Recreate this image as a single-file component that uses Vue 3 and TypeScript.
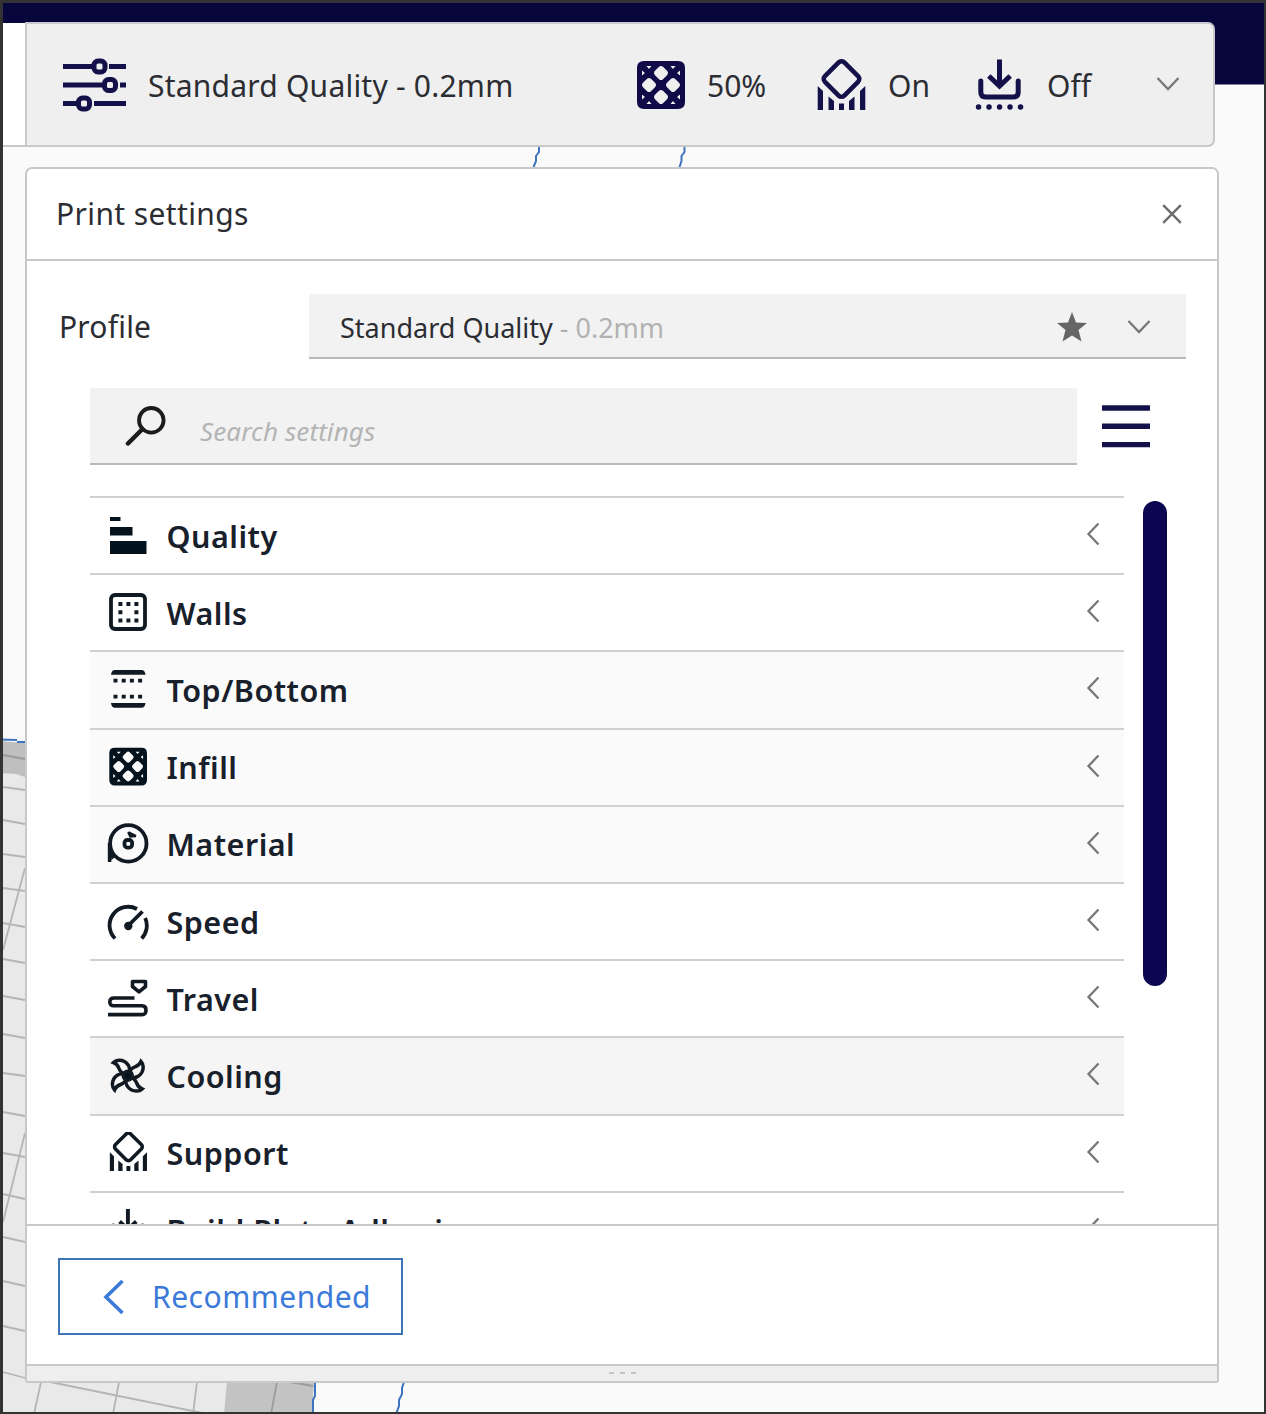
<script setup lang="ts">
interface Category {
  id: string
  label: string
  shade?: string
}

const categories: Category[] = [
  { id: 'quality', label: 'Quality' },
  { id: 'walls', label: 'Walls' },
  { id: 'topbottom', label: 'Top/Bottom', shade: 'soft' },
  { id: 'infill', label: 'Infill', shade: 'soft' },
  { id: 'material', label: 'Material', shade: 'soft' },
  { id: 'speed', label: 'Speed' },
  { id: 'travel', label: 'Travel' },
  { id: 'cooling', label: 'Cooling', shade: 'hover' },
  { id: 'support', label: 'Support' },
  { id: 'adhesion', label: 'Build Plate Adhesion' },
]

// Build plate grid lines: y on the left edge, y on the panel edge
const gridLines: [number, number][] = [
  [755, 759], [787, 790], [820, 824], [854, 857], [888, 891], [923, 927], [959, 963], [996, 1000],
  [1034, 1038], [1073, 1076], [1112, 1116], [1153, 1157], [1194, 1199], [1237, 1242],
  [1281, 1286], [1326, 1331], [1372, 1378],
]
const blades = [0, 90, 180, 270]
</script>

<template>
  <div class="window">
    <svg class="scene" viewBox="0 0 1266 1414" width="1266" height="1414">
      <rect width="1266" height="1414" fill="#fafafa" />
      <rect width="1266" height="84.5" fill="#06053c" />
      <rect y="23" width="30" height="123" fill="#fff" />
      <rect y="145" width="30" height="2" fill="#c8c8c8" />
      <path d="M0 741L25 743V1382H314L312 1414H0Z" fill="#e9e9e9" />
      <path d="M0 741L25 743V777L16 774L0 773Z" fill="#bfbfbf" />
      <path d="M227 1382H314L312 1414H224Z" fill="#c3c3c3" />
      <g stroke="#b5b5b5" stroke-width="1.8" fill="none">
        <path v-for="[a, b] in gridLines" :key="a" :d="`M3 ${a}L25 ${b}`" />
        <path d="M25 868L3 950M25 1133L3 1222M41 1382L34 1414M119 1382L113 1414M197 1382L193 1414M50 1382L207 1414" />
        <path d="M277 1382L271 1414M290 1382L313 1386M3 755L25 759" stroke="#9c9c9c" />
      </g>
      <g stroke="#3f74c0" stroke-width="2" fill="none">
        <path d="M0 739.500L17 740M17 742L25 742" />
        <path d="M539 147V152L536 156V161L533.500 167M684.500 147V152L681.500 156V161L679.500 167" />
        <path d="M315 1382V1396L313 1400V1414M404 1382L402 1388V1394L399 1400V1406L396 1414" />
      </g>
    </svg>

    <header class="summary">
      <svg width="64" height="54" viewBox="0 0 64 54" fill="none" stroke="#14104a" stroke-width="5">
        <path d="M0 8.500H30M46 8.500H63M0 27H40M57 27H63M0 45.500H14M31 45.500H63" />
        <rect x="31" y="3" width="11" height="11" rx="4" />
        <rect x="41.500" y="21.500" width="11" height="11" rx="4" />
        <rect x="15.500" y="40" width="11" height="11" rx="4" />
      </svg>
      <span class="big t-profile">Standard Quality - 0.2mm</span>
      <svg width="48" height="48" viewBox="0 0 48 48">
        <use href="#infill-shape" fill="#100b48" />
      </svg>
      <span class="big t-infill">50%</span>
      <svg width="49" height="52" viewBox="0 0 49 52" color="#14104a">
        <use href="#support-shape" />
      </svg>
      <span class="big t-support">On</span>
      <svg width="49" height="52" viewBox="0 0 49 52" color="#14104a">
        <use href="#adhesion-shape" />
      </svg>
      <span class="big t-adhesion">Off</span>
      <svg class="summary-chevron" width="24" height="16" viewBox="0 0 24 16" fill="none" stroke="#777" stroke-width="2.300">
        <path d="M1.500 2L12 13L22.500 2" />
      </svg>
    </header>

    <section class="panel">
      <div class="panel-head">
        <span class="big t-title">Print settings</span>
        <svg width="20" height="20" viewBox="0 0 20 20" stroke="#6c6c6c" stroke-width="2.400">
          <path d="M1.200 1.200L18.800 18.800M18.800 1.200L1.200 18.800" />
        </svg>
      </div>

      <div class="profile">
        <span class="big t-label">Profile</span>
        <div class="combo">
          <span class="t-combo">Standard Quality <i>- 0.2mm</i></span>
          <svg class="star" width="30" height="30" viewBox="0 0 30 30" fill="#666">
            <path d="M15 0L19 10.500L30 11L21.500 18L24.500 29.500L15 23.500L5.500 29.500L8.500 18L0 11L11 10.500Z" />
          </svg>
          <svg width="24" height="16" viewBox="0 0 24 16" fill="none" stroke="#777" stroke-width="2.300">
            <path d="M1.500 2L12 13L22.500 2" />
          </svg>
        </div>
      </div>

      <div class="search-row">
        <div class="search">
          <svg width="42" height="42" viewBox="0 0 42 42" fill="none" stroke="#1c1c1c" stroke-width="3.800">
            <circle cx="26.300" cy="15.300" r="12.300" />
            <path d="M17.500 24L3 38.500" stroke-width="4.500" stroke-linecap="round" />
          </svg>
          <span class="t-search">Search settings</span>
        </div>
        <svg class="menu" width="48" height="44" viewBox="0 0 48 44" stroke="#14104a" stroke-width="5.400">
          <path d="M0 4H48M0 22.300H48M0 40.600H48" />
        </svg>
      </div>

      <div class="list-area">
        <div class="list">
          <div v-for="c in categories" :key="c.id" class="row" :class="c.shade">
            <svg class="row-icon" width="42" height="42" viewBox="0 0 42 42" fill="none" stroke="#111a22" color="#111a22">
              <g v-if="c.id === 'quality'" fill="#03121c" stroke="none">
                <rect x="3" y="2" width="10.500" height="4" />
                <rect x="3" y="12" width="22.500" height="8.500" />
                <rect x="3" y="26" width="36.500" height="13" />
              </g>
              <g v-else-if="c.id === 'walls'">
                <rect x="4" y="3" width="34" height="34" rx="4" stroke-width="3.800" />
                <path d="M11.400 12H31.400M11.400 28.500H31.400" stroke-width="4" stroke-dasharray="4 4" />
                <path d="M11.400 20.300H15.400M27.400 20.300H31.400" stroke-width="4" />
              </g>
              <g v-else-if="c.id === 'topbottom'">
                <path d="M4 5.800Q4.500 1 8 1H34.500Q38 1 38.500 5.800ZM4 34H38.500Q38 38.700 34.500 38.700H8Q4.500 38.700 4 34Z" fill="#111a22" stroke="none" />
                <path d="M6.500 11.600H36M6.500 27.600H36" stroke-width="3.800" stroke-dasharray="4 4.200" />
              </g>
              <g v-else-if="c.id === 'infill'" transform="translate(2.300 1.700) scale(.785)" stroke="none">
                <use href="#infill-shape" fill="#03121c" />
              </g>
              <g v-else-if="c.id === 'material'">
                <circle cx="21.300" cy="20.400" r="18.200" stroke-width="3.800" />
                <path d="M2.600 20V39" stroke-width="3.600" />
                <path d="M3 28L8 34L4.400 37Z" fill="#111a22" stroke="none" />
                <rect x="17.500" y="17" width="7.600" height="7.600" rx="2.800" stroke-width="3.800" />
                <path d="M21.300 9.500L29 13.200M21.300 9L23.300 13.500L29 13" stroke-width="2.500" />
              </g>
              <g v-else-if="c.id === 'speed'" stroke-width="3.800">
                <path d="M8 37.500A18.600 18.600 0 0 1 30 8M38.200 17A18.600 18.600 0 0 1 34.600 37.500" />
                <path d="M21.300 24.500L35.500 10.500" />
                <circle cx="21.300" cy="25" r="4.200" fill="#111a22" stroke="none" />
              </g>
              <g v-else-if="c.id === 'travel'" stroke-width="3.600">
                <path d="M25.500 3.500H38.500V8.500L32 13.800L25.500 8.500Z" stroke-linejoin="round" />
                <path d="M27.500 20H7Q2.800 20 2.800 24T7 27.800H35Q39 27.800 39 32.200T35 36.600H1" />
              </g>
              <g v-else-if="c.id === 'cooling'" stroke-width="3.500">
                <path
                  v-for="r in blades" :key="r" :transform="`rotate(${r} 20.800 20.700)`"
                  d="M20.800 20.700Q24.500 16 21.500 10.500Q18 5.200 12 5.300Q8.500 5.500 6.500 7.500Q10.500 9 12 13.500Q14 19 20.800 20.700Z"
                />
                <circle cx="20.800" cy="20.700" r="4.500" fill="#03121c" />
              </g>
              <g v-else-if="c.id === 'support'" transform="translate(2.300 -.8) scale(.78)" stroke="none">
                <use href="#support-shape" />
              </g>
              <g v-else transform="translate(1.800 -.8) scale(.78)" stroke="none">
                <use href="#adhesion-shape" />
              </g>
            </svg>
            <span class="row-label">{{ c.label }}</span>
            <svg class="row-chevron" width="14" height="24" viewBox="0 0 14 24" fill="none" stroke="#777" stroke-width="2.300">
              <path d="M12.500 1.500L2.500 12L12.500 22.500" />
            </svg>
          </div>
        </div>
        <div class="scroll-thumb"></div>
      </div>

      <footer class="panel-foot">
        <button class="recommended" type="button">
          <svg width="22" height="36" viewBox="0 0 22 36" fill="none" stroke="#3b7ad9" stroke-width="3.600">
            <path d="M19.500 2L3 18L19.500 34" />
          </svg>
          <span>Recommended</span>
        </button>
      </footer>
      <div class="grip"><b></b><b></b><b></b></div>
    </section>

    <svg class="defs" width="0" height="0">
      <defs>
        <path
          id="infill-shape" fill-rule="evenodd"
          d="M7 0H41Q48 0 48 7V41Q48 48 41 48H7Q0 48 0 41V7Q0 0 7 0Z
             M22 5.800Q24 4 26 5.800L30 9.800Q32 12 30 14.200L26 18.200Q24 20 22 18.200L18 14.200Q16 12 18 9.800Z
             M22 29.800Q24 28 26 29.800L30 33.800Q32 36 30 38.200L26 42.200Q24 44 22 42.200L18 38.200Q16 36 18 33.800Z
             M10 17.800Q12 16 14 17.800L18 21.800Q20 24 18 26.200L14 30.200Q12 32 10 30.200L6 26.200Q4 24 6 21.800Z
             M34 17.800Q36 16 38 17.800L42 21.800Q44 24 42 26.200L38 30.200Q36 32 34 30.200L30 26.200Q28 24 30 21.800Z
             M9.500 5H14.500L12 8ZM33.500 5H38.500L36 8ZM9.500 43H14.500L12 40ZM33.500 43H38.500L36 40Z
             M5 9.500V14.500L8 12ZM5 33.500V38.500L8 36ZM43 9.500V14.500L40 12ZM43 33.500V38.500L40 36Z"
        />
        <g id="support-shape">
          <rect x="10.800" y="6.300" width="27.400" height="27.400" rx="4" transform="rotate(45 24.500 20)" fill="none" stroke="currentColor" stroke-width="4.600" />
          <path fill="currentColor" d="M.7 27L6 32V51H.7ZM11.500 37.500L17 42V51H11.500ZM22 44.500H27V51H22ZM37.500 37.500L32 42V51H37.500ZM48.300 27L43 32V51H48.300Z" />
        </g>
        <g id="adhesion-shape" fill="none" stroke="currentColor" stroke-width="5">
          <path d="M24.500 .5V26M13.800 17L24.500 27L35.200 17" />
          <path d="M5.800 22V33Q5.800 38 10.800 38H38.200Q43.200 38 43.200 33V22" stroke-linecap="round" />
          <path d="M3.500 48H46" stroke-width="5.400" stroke-linecap="round" stroke-dasharray=".1 10.400" />
        </g>
      </defs>
    </svg>
    <div class="frame"></div>
  </div>
</template>

<style>
body {
  margin: 0;
}
</style>

<style scoped>
.window {
  position: relative;
  box-sizing: border-box;
  width: 1266px;
  height: 1414px;
  padding: 22px 0 0 25px;
  overflow: hidden;
  font-family: "Noto Sans", sans-serif;
  color: #2b2d33;
}
.window svg {
  display: block;
  flex: none;
}
.window .scene {
  position: absolute;
  inset: 0;
}
.defs {
  position: absolute;
}
.frame {
  position: absolute;
  inset: 0;
  border: solid #333;
  border-width: 3px 2px 2px 3px;
  pointer-events: none;
}
.summary,
.panel {
  position: relative;
  box-sizing: border-box;
}
.summary {
  display: grid;
  grid-template-columns: 85px 489px 70px 110px 71px 87px 72px 109px 24px;
  align-items: center;
  width: 1190px;
  height: 125px;
  padding-left: 36px;
  background: #efefef;
  border: 2px solid #c8c8c8;
  border-top-color: #c9c9d3;
  border-radius: 0 7px 7px 0;
}
.summary .big {
  padding-top: 3px;
}
.t-profile {
  letter-spacing: 0.22px;
}
.summary-chevron {
  margin-top: -1px;
}
.big {
  font-size: 30px;
  line-height: 40px;
  white-space: nowrap;
}
.t-title {
  letter-spacing: 0.38px;
}
.panel {
  display: flex;
  flex-direction: column;
  width: 1194px;
  height: 1216px;
  margin-top: 20px;
  background: #fff;
  border: 2px solid #c8c8c8;
  border-radius: 7px 7px 3px 3px;
}
.panel-head {
  display: flex;
  align-items: center;
  justify-content: space-between;
  height: 90px;
  padding: 0 35px 0 29px;
  border-bottom: 2px solid #c8c8c8;
}
.profile {
  display: flex;
  align-items: center;
  height: 65px;
  margin: 33px 31px 0 32px;
}
.t-label {
  width: 250px;
  letter-spacing: 0.2px;
}
.combo {
  display: flex;
  flex: 1;
  align-items: center;
  box-sizing: border-box;
  height: 65px;
  padding: 2px 35px 0 31px;
  background: #f2f2f2;
  border-bottom: 2px solid #b9b9b9;
}
.t-combo {
  flex: 1;
  padding-top: 2px;
  font-size: 27px;
  white-space: nowrap;
}
.t-combo i {
  font-style: normal;
  color: #b2b2b2;
}
.star {
  margin-right: 40px;
}
.search-row {
  display: flex;
  margin: 29px 0 0 63px;
}
.search {
  display: flex;
  box-sizing: border-box;
  width: 987px;
  height: 77px;
  padding: 17px 0 0 35px;
  background: #f2f2f2;
  border-bottom: 2px solid #b9b9b9;
}
.t-search {
  margin: 8px 0 0 33px;
  font-size: 26px;
  font-style: italic;
  letter-spacing: 0.1px;
  color: #b4b4b4;
}
.menu {
  margin: 16px 0 0 25px;
}
.list-area {
  display: flex;
  height: 759px;
  padding-left: 63px;
  overflow: hidden;
}
.list {
  width: 1034px;
  margin-top: 31px;
}
.row {
  display: flex;
  align-items: center;
  box-sizing: border-box;
  height: 77.200px;
  padding: 0 24px 0 17px;
  border-top: 2px solid #d0d0d0;
}
.row.soft {
  background: #fafafa;
}
.row.hover {
  background: #f5f5f5;
}
.row-icon {
  margin-top: 0;
}
.row-label {
  flex: 1;
  margin-left: 17.500px;
  font-size: 30.500px;
  font-weight: 600;
  line-height: 40px;
  letter-spacing: 0.5px;
  color: #17202b;
}
.row-chevron {
  margin-top: -3px;
}
.scroll-thumb {
  width: 24px;
  height: 485px;
  margin: 36px 0 0 19px;
  background: #0a064f;
  border-radius: 12px;
}
.panel-foot {
  box-sizing: border-box;
  height: 140px;
  padding: 32px 0 0 31px;
  border-top: 2px solid #c8c8c8;
}
.recommended {
  display: flex;
  align-items: center;
  box-sizing: border-box;
  width: 345px;
  height: 77px;
  padding: 1px 0 0 43px;
  font: 30px/40px "Noto Sans", sans-serif;
  letter-spacing: 0.5px;
  color: #3b7ad9;
  background: #fff;
  border: 2px solid #3e74b8;
}
.recommended span {
  margin-left: 27px;
}
.grip {
  display: flex;
  flex: 1;
  gap: 6px;
  justify-content: center;
  padding-top: 6px;
  background: #eee;
  border-top: 2px solid #c8c8c8;
}
.grip b {
  width: 5px;
  height: 2px;
  background: #c4c4c4;
}
</style>
